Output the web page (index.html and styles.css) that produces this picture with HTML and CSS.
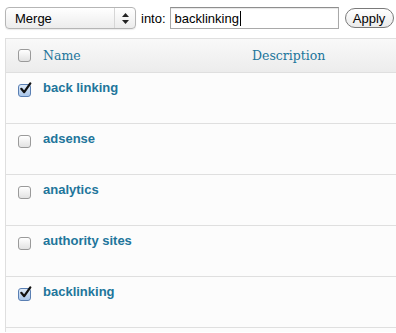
FILE: index.html
```html
<!DOCTYPE html>
<html>
<head>
<meta charset="utf-8">
<link rel="stylesheet" href="styles.css">
</head>
<body>
<div class="toolbar">
  <div class="select"><span class="select-label">Merge</span><span class="select-arrows"><svg width="7" height="11" viewBox="0 0 7 11"><path d="M3.5 0 L7 4 L0 4 Z M3.5 11 L7 7 L0 7 Z" fill="#222"/></svg></span></div>
  <span class="into">into:</span>
  <div class="input">backlinking<span class="caret"></span></div>
  <div class="apply">Apply</div>
</div>
<div class="table">
  <div class="thead">
    <div class="cb-cell"><span class="cb"></span></div>
    <div class="col-name">Name</div>
    <div class="col-desc">Description</div>
  </div>
  <div class="row"><div class="cb-cell"><span class="cb checked"><svg width="13" height="13" viewBox="0 0 13 13"><path d="M2.3 6.8 L5.2 10.2 L11.3 1.3" fill="none" stroke="#111" stroke-width="2.2" stroke-linecap="round" stroke-linejoin="round"/></svg></span></div><div class="row-name">back linking</div></div>
  <div class="row"><div class="cb-cell"><span class="cb"></span></div><div class="row-name">adsense</div></div>
  <div class="row"><div class="cb-cell"><span class="cb"></span></div><div class="row-name">analytics</div></div>
  <div class="row"><div class="cb-cell"><span class="cb"></span></div><div class="row-name">authority sites</div></div>
  <div class="row"><div class="cb-cell"><span class="cb checked"><svg width="13" height="13" viewBox="0 0 13 13"><path d="M2.3 6.8 L5.2 10.2 L11.3 1.3" fill="none" stroke="#111" stroke-width="2.2" stroke-linecap="round" stroke-linejoin="round"/></svg></span></div><div class="row-name">backlinking</div></div>
  <div class="row-end"></div>
</div>
</body>
</html>
```
FILE: styles.css
```css
html, body {
  margin: 0;
  padding: 0;
  background: #ffffff;
  width: 396px;
  height: 333px;
  overflow: hidden;
}
body {
  font-family: "Liberation Sans", Arial, sans-serif;
  font-size: 13px;
  color: #000;
}
.toolbar {
  display: flex;
  align-items: center;
  height: 36px;
  padding-left: 5px;
}
.select {
  width: 129px;
  height: 20px;
  border: 1px solid #b5b5b5;
  border-radius: 4px;
  background: linear-gradient(#ffffff, #ececec);
  display: flex;
  align-items: center;
  justify-content: space-between;
  box-shadow: 0 1px 1px rgba(0,0,0,0.08);
}
.select-label {
  padding-left: 9px;
  font-size: 13px;
}
.select-arrows {
  width: 20px;
  height: 20px;
  border-left: 1px solid #d6d6d6;
  display: flex;
  align-items: center;
  justify-content: center;
}
.into {
  margin-left: 5px;
  font-size: 13px;
}
.input {
  margin-left: 4px;
  width: 163px;
  height: 20px;
  border: 1px solid #a9a9a9;
  border-top-color: #8e8e8e;
  padding-left: 4px;
  display: flex;
  align-items: center;
  font-size: 13px;
  box-shadow: inset 0 1px 1px rgba(0,0,0,0.1);
}
.caret {
  display: inline-block;
  width: 1px;
  height: 15px;
  background: #000;
  margin-left: 1px;
}
.apply {
  margin-left: 6px;
  width: 47px;
  height: 18px;
  border: 1px solid #7a7a7a;
  border-radius: 10px;
  background: linear-gradient(#ffffff, #eaeaea);
  display: flex;
  align-items: center;
  justify-content: center;
  font-size: 13px;
}
.table {
  margin-left: 5px;
  margin-top: 2px;
  border-left: 1px solid #dfdfdf;
  border-top: 1px solid #dfdfdf;
}
.thead {
  display: flex;
  align-items: center;
  height: 33px;
  background: linear-gradient(#f9f9f9, #ececec);
  border-bottom: 1px solid #dfdfdf;
  font-family: "DejaVu Serif", Georgia, serif;
  font-size: 12.5px;
  color: #21759b;
}
.cb-cell {
  width: 37px;
  display: flex;
  justify-content: center;
}
.cb {
  width: 11px;
  height: 11px;
  border: 1px solid #9a9a9a;
  border-radius: 3px;
  background: linear-gradient(#ffffff, #e2e2e2);
  display: flex;
  align-items: center;
  justify-content: center;
  position: relative;
}
.cb.checked {
  background: linear-gradient(#dde9f7, #a9c6ea);
  border-color: #5a7fb3;
}
.cb.checked svg {
  position: absolute;
  left: 0;
  top: -3px;
}
.col-name {
  width: 209px;
}
.row {
  display: flex;
  align-items: flex-start;
  height: 50px;
  border-bottom: 1px solid #dfdfdf;
  background: #fcfcfc;
}
.row-end {
  height: 4px;
  background: #fcfcfc;
}
.row .cb-cell {
  padding-top: 11px;
}
.row-name {
  padding-top: 7px;
  font-weight: bold;
  font-size: 13px;
  color: #21759b;
}
```
